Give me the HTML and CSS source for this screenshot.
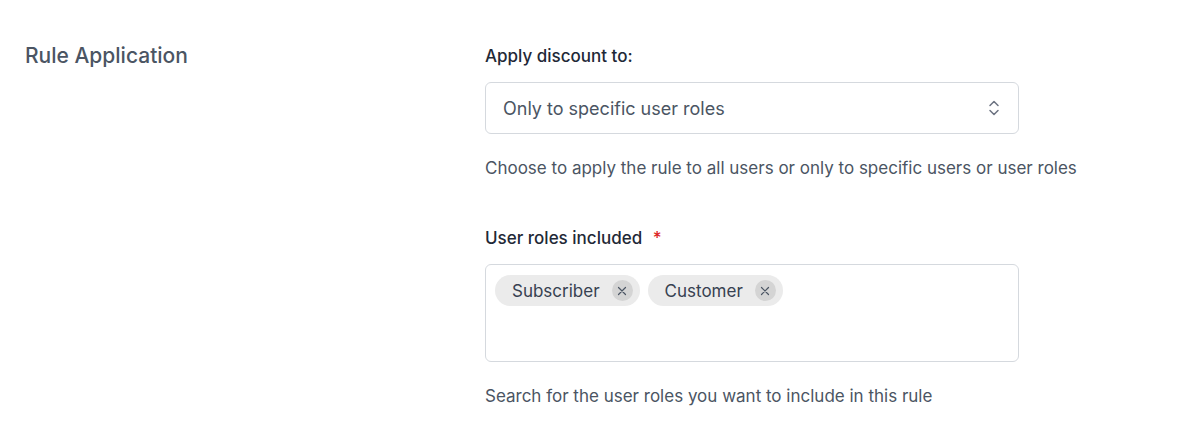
FILE: index.html
```html
<!DOCTYPE html>
<html lang="en">
<head>
    <meta charset="UTF-8">
    <meta name="viewport" content="width=device-width, initial-scale=1.0">
    <title>Rule Application</title>
    <link rel="stylesheet" href="styles.css">
</head>
<body>
    <!-- Rule application settings -->
    <div class="settings-row">
        <h2 class="row-title">Rule Application</h2>

        <div class="row-fields">
            <div class="field">
                <label class="field-label" for="applyTo">Apply discount to:</label>
                <div class="select-box" id="applyTo">
                    <span class="select-value">Only to specific user roles</span>
                    <svg class="select-arrows" width="12" height="18" viewBox="0 0 12 18" fill="none" stroke="#6b7280" stroke-width="1.5" stroke-linecap="round" stroke-linejoin="round">
                        <path d="M2 6.5 L6 2.5 L10 6.5"/>
                        <path d="M2 11.5 L6 15.5 L10 11.5"/>
                    </svg>
                </div>
                <p class="field-help">Choose to apply the rule to all users or only to specific users or user roles</p>
            </div>

            <div class="field">
                <label class="field-label">User roles included <span class="required">*</span></label>
                <div class="tag-box">
                    <span class="tag">Subscriber
                        <span class="tag-remove">
                            <svg width="10" height="10" viewBox="0 0 10 10" stroke="#4b5563" stroke-width="1.2" stroke-linecap="round"><path d="M1.5 1.5 L8.5 8.5 M8.5 1.5 L1.5 8.5"/></svg>
                        </span>
                    </span>
                    <span class="tag">Customer
                        <span class="tag-remove">
                            <svg width="10" height="10" viewBox="0 0 10 10" stroke="#4b5563" stroke-width="1.2" stroke-linecap="round"><path d="M1.5 1.5 L8.5 8.5 M8.5 1.5 L1.5 8.5"/></svg>
                        </span>
                    </span>
                </div>
                <p class="field-help">Search for the user roles you want to include in this rule</p>
            </div>
        </div>
    </div>
</body>
</html>
```

FILE: styles.css
```css
/* General Body Styling */
body {
    font-family: 'Inter', 'Noto Sans', Arial, sans-serif;
    background-color: #ffffff;
    color: #1f2937;
    margin: 0;
    padding: 0;
}

/* Two column row */
.settings-row {
    display: grid;
    grid-template-columns: 460px 534px;
    padding: 42px 25px 0 25px;
}

.row-title {
    margin: 0;
    font-size: 21px;
    font-weight: 500;
    color: #4b5563;
    line-height: 28px;
}

.row-fields {
    display: flex;
    flex-direction: column;
    gap: 46px;
    padding-top: 2px;
}

/* Form Labels */
.field-label {
    display: block;
    font-size: 17px;
    font-weight: 500;
    color: #1f2937;
    line-height: 24px;
    margin-bottom: 14px;
}

.required {
    color: #dc2626;
    margin-left: 6px;
}

/* Select */
.select-box {
    display: flex;
    align-items: center;
    justify-content: space-between;
    height: 52px;
    box-sizing: border-box;
    padding: 0 18px 0 17px;
    border: 1px solid #d5d9de;
    border-radius: 6px;
}

.select-value {
    font-size: 18px;
    color: #4b5563;
}

.field-help {
    margin: 22px 0 0 0;
    font-size: 17px;
    line-height: 24px;
    color: #4b5563;
    white-space: nowrap;
}

/* Tag input */
.tag-box {
    display: flex;
    align-items: flex-start;
    gap: 8px;
    height: 98px;
    box-sizing: border-box;
    padding: 10px 9px;
    border: 1px solid #d5d9de;
    border-radius: 6px;
}

.tag {
    display: inline-flex;
    align-items: center;
    gap: 12px;
    height: 31px;
    padding: 0 7px 0 17px;
    border-radius: 16px;
    background-color: #ebebeb;
    font-size: 17px;
    color: #374151;
}

.tag-remove {
    display: inline-flex;
    align-items: center;
    justify-content: center;
    width: 21px;
    height: 21px;
    border-radius: 50%;
    background-color: #d4d4d4;
}
```
